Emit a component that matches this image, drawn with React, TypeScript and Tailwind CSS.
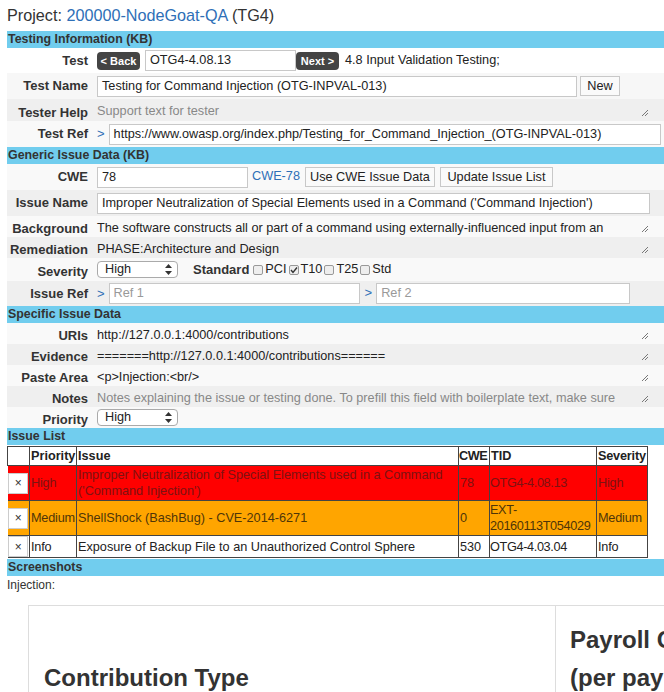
import React from "react"

const Grip = () => (
  <svg width="8" height="8" viewBox="0 0 8 8" className="ml-auto mr-[15px] self-end mb-[4px] shrink-0">
    <path d="M1 7 L7 1 M4 7 L7 4" stroke="#777" strokeWidth="1" fill="none" />
  </svg>
)

const Section = ({ title }: { title: string }) => (
  <div className="h-[17px] bg-[#71cdee] pl-[1px] text-[12.4px] font-bold leading-[17px] text-[#333]">{title}</div>
)

type RowProps = {
  label: string
  bg: string
  h: string
  low?: boolean
  children?: React.ReactNode
}

const Row = ({ label, bg, h, low, children }: RowProps) => (
  <div className={`flex ${bg} ${h}`}>
    <div className={`w-[84px] shrink-0 pr-[3px] text-right text-[13px] font-bold text-[#333] flex items-center justify-end ${low ? "pt-[5px]" : ""}`}>
      {label}
    </div>
    <div className="flex flex-1 items-center pl-[6px] text-[12.7px] text-[#222]">{children}</div>
  </div>
)

const Input = ({ value, w, placeholder }: { value?: string; w: string; placeholder?: string }) => (
  <div className={`${w} h-[21px] shrink-0 border border-[#c8c8c8] bg-white px-[4px] text-[12.7px] leading-[19px] whitespace-nowrap overflow-hidden`}>
    {value ? <span className="text-[#222]">{value}</span> : <span className="text-[#999]">{placeholder}</span>}
  </div>
)

const Btn = ({ children, w }: { children: React.ReactNode; w: string }) => (
  <div className={`${w} h-[20px] shrink-0 border border-[#c8c8c8] bg-[#fafafa] text-center text-[12.7px] leading-[18px] text-[#222]`}>
    {children}
  </div>
)

const DarkBtn = ({ children }: { children: React.ReactNode }) => (
  <div className="h-[18px] w-[43px] shrink-0 rounded-[4px] bg-[#444] text-center text-[11px] font-bold leading-[18px] text-white">
    {children}
  </div>
)

const Select = ({ value }: { value: string }) => (
  <div className="flex h-[17px] w-[81px] shrink-0 items-center justify-between rounded-[4px] border border-[#aaa] bg-white pl-[7px] pr-[5px] text-[12.7px] text-[#222]">
    <span>{value}</span>
    <svg width="7" height="11" viewBox="0 0 7 11">
      <path d="M3.5 0 L7 4 L0 4 Z M0 7 L7 7 L3.5 11 Z" fill="#333" />
    </svg>
  </div>
)

const Check = ({ on }: { on?: boolean }) => (
  <span className="mx-[2px] inline-flex h-[10px] w-[10px] items-center justify-center rounded-[2px] border border-[#999] bg-[#eee]">
    {on && (
      <svg width="8" height="8" viewBox="0 0 8 8">
        <path d="M1 4 L3 6.5 L7 1.5" stroke="#333" strokeWidth="1.4" fill="none" />
      </svg>
    )}
  </span>
)

const Arrow = () => <span className="mr-[4px] text-[13px] text-[#2e6fb7]">&gt;</span>

const XBtn = () => (
  <div className="mx-auto flex h-[21px] w-[20px] items-center justify-center border border-[#ccc] bg-white text-[12px] text-[#333]">
    ×
  </div>
)

const issues = [
  {
    pri: "High",
    issue: "Improper Neutralization of Special Elements used in a Command ('Command Injection')",
    cwe: "78",
    tid: "OTG4-4.08.13",
    sev: "High",
    row: "bg-[#ff0000] text-[#7d1212] h-[35px]",
  },
  {
    pri: "Medium",
    issue: "ShellShock (BashBug) - CVE-2014-6271",
    cwe: "0",
    tid: "EXT-20160113T054029",
    sev: "Medium",
    row: "bg-[#ffa500] text-[#4f3508] h-[35px]",
  },
  {
    pri: "Info",
    issue: "Exposure of Backup File to an Unauthorized Control Sphere",
    cwe: "530",
    tid: "OTG4-4.03.04",
    sev: "Info",
    row: "bg-white text-[#222] h-[21px]",
  },
]

export default function App() {
  return (
    <div className="h-[692px] w-[664px] overflow-hidden bg-white font-['Liberation_Sans',Arial,sans-serif] text-[#333]">
      <div className="h-[31px] pl-[7px] pt-[5px] text-[16.2px] leading-[20px] text-[#333]">
        Project: <span className="text-[#2e6fb7]">200000-NodeGoat-QA</span> (TG4)
      </div>

      <div className="pl-[7px]">
        <Section title="Testing Information (KB)" />
        <Row label="Test" bg="bg-white" h="h-[25px]">
          <DarkBtn>&lt; Back</DarkBtn>
          <div className="ml-[5px]">
            <Input value="OTG4-4.08.13" w="w-[151px]" />
          </div>
          <DarkBtn>Next &gt;</DarkBtn>
          <span className="ml-[6px]">4.8 Input Validation Testing;</span>
        </Row>
        <Row label="Test Name" bg="bg-[#f7f7f7]" h="h-[26px]">
          <Input value="Testing for Command Injection (OTG-INPVAL-013)" w="w-[480px]" />
          <div className="ml-[3px]">
            <Btn w="w-[40px]">New</Btn>
          </div>
        </Row>
        <Row label="Tester Help" bg="bg-[#efefef]" h="h-[22px]" low>
          <span className="self-start pt-[3px] text-[#888]">Support text for tester</span>
          <Grip />
        </Row>
        <Row label="Test Ref" bg="bg-[#f9f9f9]" h="h-[26px]">
          <Arrow />
          <Input value="https://www.owasp.org/index.php/Testing_for_Command_Injection_(OTG-INPVAL-013)" w="w-[552px]" />
        </Row>

        <Section title="Generic Issue Data (KB)" />
        <Row label="CWE" bg="bg-[#f9f9f9]" h="h-[26px]">
          <Input value="78" w="w-[151px]" />
          <span className="ml-[4px] text-[#2e6fb7]">CWE-78</span>
          <div className="ml-[5px]">
            <Btn w="w-[130px]">Use CWE Issue Data</Btn>
          </div>
          <div className="ml-[5px]">
            <Btn w="w-[113px]">Update Issue List</Btn>
          </div>
        </Row>
        <Row label="Issue Name" bg="bg-[#efefef]" h="h-[26px]">
          <Input value="Improper Neutralization of Special Elements used in a Command ('Command Injection')" w="w-[553px]" />
        </Row>
        <Row label="Background" bg="bg-[#f9f9f9]" h="h-[21px]" low>
          <span className="self-start whitespace-nowrap pt-[3px]">
            The software constructs all or part of a command using externally-influenced input from an
          </span>
          <Grip />
        </Row>
        <Row label="Remediation" bg="bg-[#efefef]" h="h-[21px]" low>
          <span className="self-start pt-[3px]">PHASE:Architecture and Design</span>
          <Grip />
        </Row>
        <Row label="Severity" bg="bg-[#f9f9f9]" h="h-[23px]" low>
          <Select value="High" />
          <span className="ml-[15px] mr-[2px] text-[13px] font-bold text-[#333]">Standard</span>
          <Check />
          <span>PCI</span>
          <Check on />
          <span>T10</span>
          <Check />
          <span>T25</span>
          <Check />
          <span>Std</span>
        </Row>
        <Row label="Issue Ref" bg="bg-[#efefef]" h="h-[25px]">
          <Arrow />
          <Input placeholder="Ref 1" w="w-[251px]" />
          <span className="ml-[5px]">
            <Arrow />
          </span>
          <Input placeholder="Ref 2" w="w-[254px]" />
        </Row>

        <Section title="Specific Issue Data" />
        <Row label="URIs" bg="bg-[#f9f9f9]" h="h-[21px]" low>
          <span className="self-start pt-[3px]">http://127.0.0.1:4000/contributions</span>
          <Grip />
        </Row>
        <Row label="Evidence" bg="bg-[#efefef]" h="h-[21px]" low>
          <span className="self-start pt-[3px]">=======http://127.0.0.1:4000/contributions======</span>
          <Grip />
        </Row>
        <Row label="Paste Area" bg="bg-[#f9f9f9]" h="h-[21px]" low>
          <span className="self-start pt-[3px]">&lt;p&gt;Injection:&lt;br/&gt;</span>
          <Grip />
        </Row>
        <Row label="Notes" bg="bg-[#efefef]" h="h-[21px]" low>
          <span className="self-start whitespace-nowrap pt-[3px] text-[#888]">
            Notes explaining the issue or testing done. To prefill this field with boilerplate text, make sure
          </span>
          <Grip />
        </Row>
        <Row label="Priority" bg="bg-[#f9f9f9]" h="h-[21px]" low>
          <Select value="High" />
        </Row>

        <Section title="Issue List" />
        <table className="mt-[1px] w-[640px] table-fixed border-collapse text-[12.7px] leading-[16px]">
          <colgroup>
            <col className="w-[22px]" />
            <col className="w-[47px]" />
            <col className="w-[382px]" />
            <col className="w-[31px]" />
            <col className="w-[107px]" />
            <col className="w-[51px]" />
          </colgroup>
          <thead>
            <tr className="h-[19px] text-left font-bold text-[#222]">
              <th className="border border-[#444]"></th>
              <th className="border border-[#444] px-[1px]">Priority</th>
              <th className="border border-[#444] px-[1px]">Issue</th>
              <th className="border border-[#444] px-0 tracking-[-0.4px]">CWE</th>
              <th className="border border-[#444] px-[1px]">TID</th>
              <th className="border border-[#444] px-[1px] tracking-[-0.2px]">Severity</th>
            </tr>
          </thead>
          <tbody>
            {issues.map((it) => (
              <tr key={it.tid} className={it.row}>
                <td className="border-y border-[#444] p-0">
                  <XBtn />
                </td>
                <td className="border border-[#444] px-[1px] tracking-[-0.2px]">{it.pri}</td>
                <td className="border border-[#444] px-[1px]">{it.issue}</td>
                <td className="border border-[#444] px-[1px]">{it.cwe}</td>
                <td className="border border-[#444] px-0 tracking-[-0.35px]">{it.tid}</td>
                <td className="border border-[#444] px-[1px] tracking-[-0.2px]">{it.sev}</td>
              </tr>
            ))}
          </tbody>
        </table>

        <div className="mt-[1px]">
          <Section title="Screenshots" />
        </div>
        <div className="pt-[2px] text-[12px] leading-[14px] text-[#333]">Injection:</div>

        <div className="ml-[21px] mt-[13px] flex h-[120px] w-[700px] border-l border-t border-[#ddd]">
          <div className="w-[527px] shrink-0 border-r border-[#ddd] pl-[15px] pt-[53px] text-[24px] font-bold leading-[38px] text-[#333]">
            Contribution Type
          </div>
          <div className="whitespace-nowrap pl-[14px] pt-[15px] text-[24px] font-bold leading-[38px] text-[#333]">
            Payroll Contribution
            <br />
            (per pay period)
          </div>
        </div>
      </div>
    </div>
  )
}
